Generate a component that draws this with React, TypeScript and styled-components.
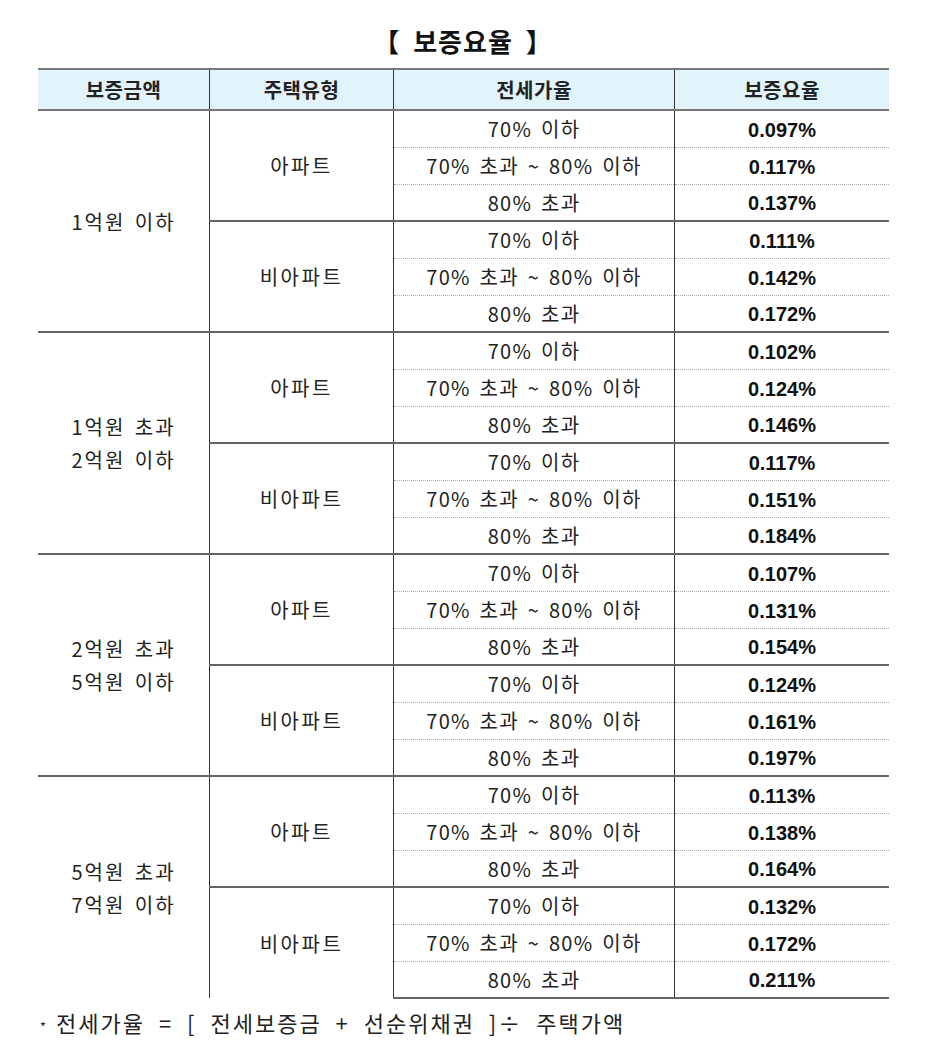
import React from 'react';
import styled, { createGlobalStyle } from 'styled-components';

const GlobalStyle = createGlobalStyle`
  body {
    margin: 0;
    background: #fff;
    font-family: "Noto Sans CJK KR", "Noto Sans", sans-serif;
    color: #222;
  }
`;

interface Group {
  amount: string[];
  types: { name: string; rates: string[] }[];
}

const RATIOS = ['70% 이하', '70% 초과 ~ 80% 이하', '80% 초과'];

const GROUPS: Group[] = [
  {
    amount: ['1억원 이하'],
    types: [
      { name: '아파트', rates: ['0.097%', '0.117%', '0.137%'] },
      { name: '비아파트', rates: ['0.111%', '0.142%', '0.172%'] },
    ],
  },
  {
    amount: ['1억원 초과', '2억원 이하'],
    types: [
      { name: '아파트', rates: ['0.102%', '0.124%', '0.146%'] },
      { name: '비아파트', rates: ['0.117%', '0.151%', '0.184%'] },
    ],
  },
  {
    amount: ['2억원 초과', '5억원 이하'],
    types: [
      { name: '아파트', rates: ['0.107%', '0.131%', '0.154%'] },
      { name: '비아파트', rates: ['0.124%', '0.161%', '0.197%'] },
    ],
  },
  {
    amount: ['5억원 초과', '7억원 이하'],
    types: [
      { name: '아파트', rates: ['0.113%', '0.138%', '0.164%'] },
      { name: '비아파트', rates: ['0.132%', '0.172%', '0.211%'] },
    ],
  },
];

const Page = styled.div`
  width: 925px;
  padding: 22px 0 0 38px;
  box-sizing: border-box;
`;

const Title = styled.h1`
  margin: 0 0 8px;
  width: 850px;
  text-align: center;
  font-size: 26px;
  font-weight: 700;
  line-height: 38px;
  color: #111;
  word-spacing: 6px;
  letter-spacing: 1px;
`;

const Table = styled.table`
  width: 850px;
  border-collapse: collapse;
  table-layout: fixed;
`;

const HeadCell = styled.th<{ $w: number }>`
  width: ${(p) => p.$w}px;
  height: 39px;
  padding: 0;
  background: #e1f4fb;
  border-top: 2px solid #777;
  border-bottom: 2px solid #777;
  border-left: 1px solid #333;
  font-size: 20px;
  font-weight: 700;
  color: #222;
  text-align: center;
  letter-spacing: 0.5px;
  &:first-child {
    border-left: none;
  }
`;

const Row = styled.tr<{ $line: 'group' | 'type' | 'dot' }>`
  height: 37px;
  & > td.ratio,
  & > td.rate {
    border-top: ${(p) => (p.$line === 'dot' ? '1px dotted #aaa' : '2px solid #666')};
  }
`;

const AmountCell = styled.td`
  padding: 0;
  text-align: center;
  vertical-align: middle;
  border-top: 2px solid #666;
  font-size: 20px;
  line-height: 33px;
  letter-spacing: 2px;
  word-spacing: 3px;
  color: #222;
`;

const TypeCell = styled.td`
  padding: 0;
  text-align: center;
  vertical-align: middle;
  border-top: 2px solid #666;
  border-left: 1px solid #333;
  font-size: 20px;
  letter-spacing: 2.5px;
  color: #222;
`;

const RatioCell = styled.td`
  padding: 0;
  text-align: center;
  border-left: 1px solid #333;
  font-size: 20px;
  letter-spacing: 1.3px;
  word-spacing: 3px;
  color: #222;
  white-space: nowrap;
`;

const RateCell = styled.td`
  padding: 3px 0 0;
  text-align: center;
  border-left: 1px solid #333;
  font-family: "Liberation Sans", Arial, sans-serif;
  font-size: 20px;
  font-weight: 700;
  color: #111;
`;

const Body = styled.tbody`
  & > tr:last-child > td {
    border-bottom: 2px solid #666;
  }
`;

const Note = styled.p`
  margin: 7px 0 0;
  font-size: 22px;
  letter-spacing: 2px;
  word-spacing: 7px;
  color: #222;
`;

const Star = styled.span`
  font-size: 13px;
  vertical-align: middle;
  margin: 0 8px 0 2px;
`;

export default function App() {
  return (
    <Page>
      <GlobalStyle />
      <Title>【 보증요율 】</Title>
      <Table>
        <thead>
          <tr>
            <HeadCell $w={171}>보증금액</HeadCell>
            <HeadCell $w={183}>주택유형</HeadCell>
            <HeadCell $w={280}>전세가율</HeadCell>
            <HeadCell $w={214}>보증요율</HeadCell>
          </tr>
        </thead>
        <Body>
          {GROUPS.map((g, gi) =>
            g.types.map((t, ti) =>
              t.rates.map((rate, ri) => (
                <Row key={`${gi}-${ti}-${ri}`} $line={ri === 0 ? (ti === 0 ? 'group' : 'type') : 'dot'}>
                  {ti === 0 && ri === 0 && (
                    <AmountCell rowSpan={6}>
                      {g.amount.map((a) => (
                        <div key={a}>{a}</div>
                      ))}
                    </AmountCell>
                  )}
                  {ri === 0 && <TypeCell rowSpan={3}>{t.name}</TypeCell>}
                  <RatioCell className="ratio">{RATIOS[ri]}</RatioCell>
                  <RateCell className="rate">{rate}</RateCell>
                </Row>
              ))
            )
          )}
        </Body>
      </Table>
      <Note>
        <Star>*</Star>전세가율 = [ 전세보증금 + 선순위채권 ]÷ 주택가액
      </Note>
    </Page>
  );
}
